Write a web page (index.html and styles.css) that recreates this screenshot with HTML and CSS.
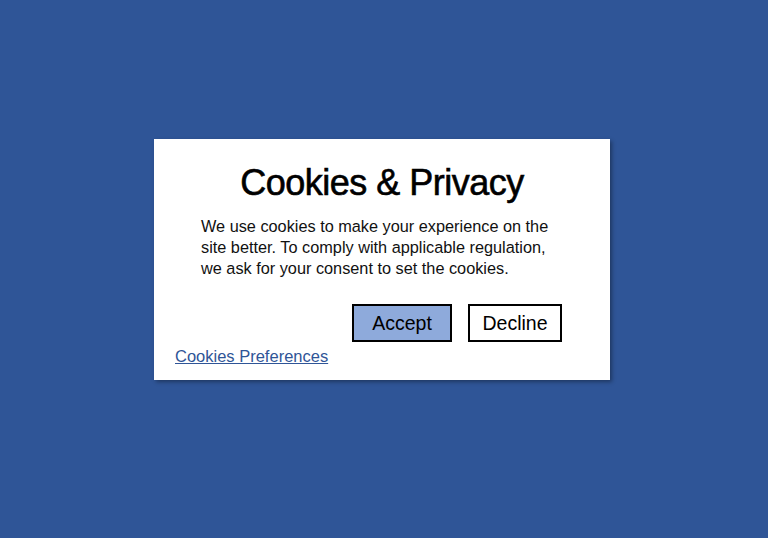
FILE: index.html
```html
<!DOCTYPE html>
<html lang="en">

<head>
  <meta charset="UTF-8">
  <meta name="viewport" content="width=device-width, initial-scale=1.0">
  <title>Cookies &amp; Privacy</title>
  <link rel="stylesheet" href="styles.css">
</head>

<body>
  <div class="cookie-box">
    <h1>Cookies &amp; Privacy</h1>
    <p class="cookie-text">We use cookies to make your experience on the site better. To comply with applicable regulation, we ask for your consent to set the cookies.</p>
    <div class="cookie-actions">
      <button class="btn btn-accept">Accept</button>
      <button class="btn btn-decline">Decline</button>
    </div>
    <a href="#" class="cookie-link">Cookies Preferences</a>
  </div>
</body>

</html>
```

FILE: styles.css
```css
* {
  box-sizing: border-box;
  margin: 0;
  padding: 0;
  font-family: 'Liberation Sans', Arial, sans-serif;
}

body {
  width: 768px;
  height: 538px;
  background: #2f5597;
  padding: 139px 0 0 154px;
}

.cookie-box {
  width: 456px;
  height: 241px;
  background: #fff;
  box-shadow: 2px 2px 4px rgba(0, 0, 0, 0.35);
  padding: 22px 21px 0;
}

.cookie-box h1 {
  font-size: 36px;
  font-weight: normal;
  letter-spacing: -0.5px;
  text-align: center;
  color: #000;
  line-height: 44px;
  -webkit-text-stroke: 0.6px #000;
}

.cookie-text {
  width: 360px;
  margin: 11px 0 0 26px;
  font-size: 16.3px;
  line-height: 21px;
  color: #111;
}

.cookie-actions {
  display: flex;
  justify-content: flex-end;
  gap: 16px;
  margin: 25px 27px 0 0;
}

.btn {
  height: 38px;
  padding: 0;
  border: 2px solid #000;
  font-size: 19.5px;
  color: #000;
  cursor: pointer;
}

.btn-accept {
  background: #8eaadb;
  width: 100px;
}

.btn-decline {
  background: #fff;
  width: 94px;
}

.cookie-link {
  display: inline-block;
  margin-top: 5px;
  font-size: 16.5px;
  color: #2f5597;
}
```
